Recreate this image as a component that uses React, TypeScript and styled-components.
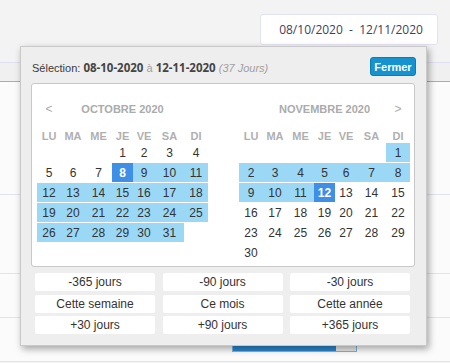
import React from "react";
import styled, { createGlobalStyle } from "styled-components";

const GlobalStyle = createGlobalStyle`
  html, body { margin: 0; padding: 0; }
  body {
    background: #f3f3f3;
    font-family: "Liberation Sans", Arial, sans-serif;
    width: 450px;
    height: 363px;
    overflow: hidden;
  }
`;

const Page = styled.div`
  position: relative;
  width: 450px;
  height: 363px;
  overflow: hidden;
`;

const TopBar = styled.div`
  height: 62px;
  box-sizing: border-box;
  display: flex;
  justify-content: flex-end;
  align-items: flex-start;
  padding: 14px 12px 0 0;
`;

const DateInput = styled.div`
  width: 178px;
  height: 31px;
  box-sizing: border-box;
  background: #fff;
  border: 1px solid #e2e3f0;
  border-radius: 3px;
  display: flex;
  align-items: center;
  justify-content: center;
  font-family: "Open Sans", sans-serif;
  font-size: 12px;
  color: #3f4160;
  white-space: pre;
  padding-left: 4px;
`;

const Band = styled.div`
  height: 18px;
  background: #f0f0f0;
  border-top: 1px solid #dedff0;
  border-bottom: 1px solid #a9abb8;
`;

const Row = styled.div<{ $h: number }>`
  height: ${(p) => p.$h}px;
  box-sizing: border-box;
  background: #fbfbfb;
  border-bottom: 1px solid #e3e3ef;
`;

const BarRow = styled(Row)`
  padding: 12px 0 0 232px;
`;

const Bar = styled.div`
  width: 125px;
  height: 22px;
  box-sizing: border-box;
  border: 1px solid #78b6e2;
  background: #e9e9e9;
  display: flex;
`;

const BarFill = styled.div`
  background: #2a86cf;
  height: 100%;
`;

const Popup = styled.div`
  position: absolute;
  left: 20px;
  top: 46px;
  width: 407px;
  height: 300px;
  box-sizing: border-box;
  background: #eeeeee;
  border: 1px solid #c9c9c9;
  box-shadow: 2px 3px 7px rgba(0, 0, 0, 0.35);
  padding-top: 10px;
  display: flex;
  flex-direction: column;
`;

const Header = styled.div`
  height: 19px;
  display: flex;
  align-items: center;
  justify-content: space-between;
  padding: 0 10px 0 11px;
  font-size: 11px;
  color: #3a3a3a;
`;

const HeaderText = styled.span`
  padding-top: 2px;
`;

const Strong = styled.b`
  font-family: "Open Sans", sans-serif;
  font-size: 11.5px;
  font-weight: 700;
  color: #444;
`;

const Muted = styled.span<{ $italic?: boolean }>`
  color: #a0a0a0;
  font-style: ${(p) => (p.$italic ? "italic" : "normal")};
`;

const CloseButton = styled.button`
  height: 19px;
  width: 46px;
  padding: 0;
  border: 1px solid #0b7db6;
  border-radius: 3px;
  background: #1592cf;
  color: #fff;
  font-family: "Liberation Sans", Arial, sans-serif;
  font-weight: 700;
  font-size: 11px;
  cursor: pointer;
`;

const CalendarBox = styled.div`
  margin: 7px 11px 0 10px;
  height: 184px;
  box-sizing: border-box;
  background: #fff;
  border: 1px solid #c8c8c8;
  border-radius: 3px;
  display: flex;
  justify-content: space-between;
  align-items: flex-start;
  padding: 15px 4px 0 5px;
`;

const COLS = "24px 24px 27px 21px 22px 29px 24px";

const Month = styled.div`
  width: 171px;
  display: flex;
  flex-direction: column;
`;

const TitleRow = styled.div`
  display: grid;
  grid-template-columns: ${COLS};
  height: 20px;
  align-items: center;
  font-size: 11px;
  font-weight: 700;
  color: #ababab;
`;

const Arrow = styled.span<{ $col: number }>`
  grid-column: ${(p) => p.$col};
  grid-row: 1;
  text-align: center;
  font-weight: 400;
  font-size: 12px;
  color: #aaa;
`;

const Title = styled.span`
  grid-column: 2 / 7;
  grid-row: 1;
  text-align: center;
`;

const DayNames = styled.div`
  display: grid;
  grid-template-columns: ${COLS};
  height: 18px;
  box-sizing: border-box;
  padding-top: 4px;
  margin-top: 6px;
  align-items: center;
  font-size: 11px;
  font-weight: 700;
  color: #b0b0b0;
  text-align: center;
`;

const Days = styled.div`
  display: grid;
  grid-template-columns: ${COLS};
  grid-auto-rows: 19px;
  row-gap: 1px;
`;

type Kind = "none" | "range" | "edge";

const Day = styled.div<{ $kind: Kind; $col: number }>`
  grid-column: ${(p) => p.$col};
  display: flex;
  align-items: center;
  justify-content: center;
  padding-top: 1px;
  box-sizing: border-box;
  font-size: 12px;
  color: ${(p) => (p.$kind === "edge" ? "#fff" : "#333")};
  font-weight: ${(p) => (p.$kind === "edge" ? 700 : 400)};
  background: ${(p) =>
    p.$kind === "edge" ? "#3f8fe6" : p.$kind === "range" ? "#9bd8f6" : "transparent"};
`;

const Presets = styled.div`
  display: grid;
  grid-template-columns: repeat(3, 120px);
  grid-auto-rows: 18px;
  column-gap: 7.5px;
  row-gap: 3.5px;
  padding: 6px 0 0 14px;
`;

const Preset = styled.button`
  border: none;
  border-radius: 2px;
  background: #fff;
  padding: 0;
  font-family: "Liberation Sans", Arial, sans-serif;
  font-size: 12px;
  color: #333;
  cursor: pointer;
`;

const DAY_NAMES = ["LU", "MA", "ME", "JE", "VE", "SA", "DI"];

interface MonthProps {
  title: string;
  startCol: number;
  count: number;
  kindOf: (d: number) => Kind;
  prev?: boolean;
  next?: boolean;
}

function MonthView({ title, startCol, count, kindOf, prev, next }: MonthProps) {
  const days = Array.from({ length: count }, (_, i) => i + 1);
  return (
    <Month>
      <TitleRow>
        {prev && <Arrow $col={1}>&lt;</Arrow>}
        <Title>{title}</Title>
        {next && <Arrow $col={7}>&gt;</Arrow>}
      </TitleRow>
      <DayNames>
        {DAY_NAMES.map((n) => (
          <span key={n}>{n}</span>
        ))}
      </DayNames>
      <Days>
        {days.map((d) => {
          const col = ((startCol - 1 + d - 1) % 7) + 1;
          return (
            <Day key={d} $col={col} $kind={kindOf(d)}>
              {d}
            </Day>
          );
        })}
      </Days>
    </Month>
  );
}

const PRESETS = [
  "-365 jours",
  "-90 jours",
  "-30 jours",
  "Cette semaine",
  "Ce mois",
  "Cette année",
  "+30 jours",
  "+90 jours",
  "+365 jours",
];

export default function App() {
  return (
    <Page>
      <GlobalStyle />
      <TopBar>
        <DateInput>{"08/10/2020  -  12/11/2020"}</DateInput>
      </TopBar>
      <Band />
      <Row $h={113} />
      <Row $h={79} />
      <Row $h={44} />
      <BarRow $h={44}>
        <Bar>
          <BarFill style={{ width: "84%" }} />
        </Bar>
      </BarRow>

      <Popup>
        <Header>
          <HeaderText>
            Sélection: <Strong>08-10-2020</Strong> <Muted>à</Muted> <Strong>12-11-2020</Strong>{" "}
            <Muted $italic>(37 Jours)</Muted>
          </HeaderText>
          <CloseButton>Fermer</CloseButton>
        </Header>
        <CalendarBox>
          <MonthView
            title="OCTOBRE 2020"
            startCol={4}
            count={31}
            prev
            kindOf={(d) => (d === 8 ? "edge" : d > 8 ? "range" : "none")}
          />
          <MonthView
            title="NOVEMBRE 2020"
            startCol={7}
            count={30}
            next
            kindOf={(d) => (d === 12 ? "edge" : d < 12 ? "range" : "none")}
          />
        </CalendarBox>
        <Presets>
          {PRESETS.map((p) => (
            <Preset key={p}>{p}</Preset>
          ))}
        </Presets>
      </Popup>
    </Page>
  );
}
